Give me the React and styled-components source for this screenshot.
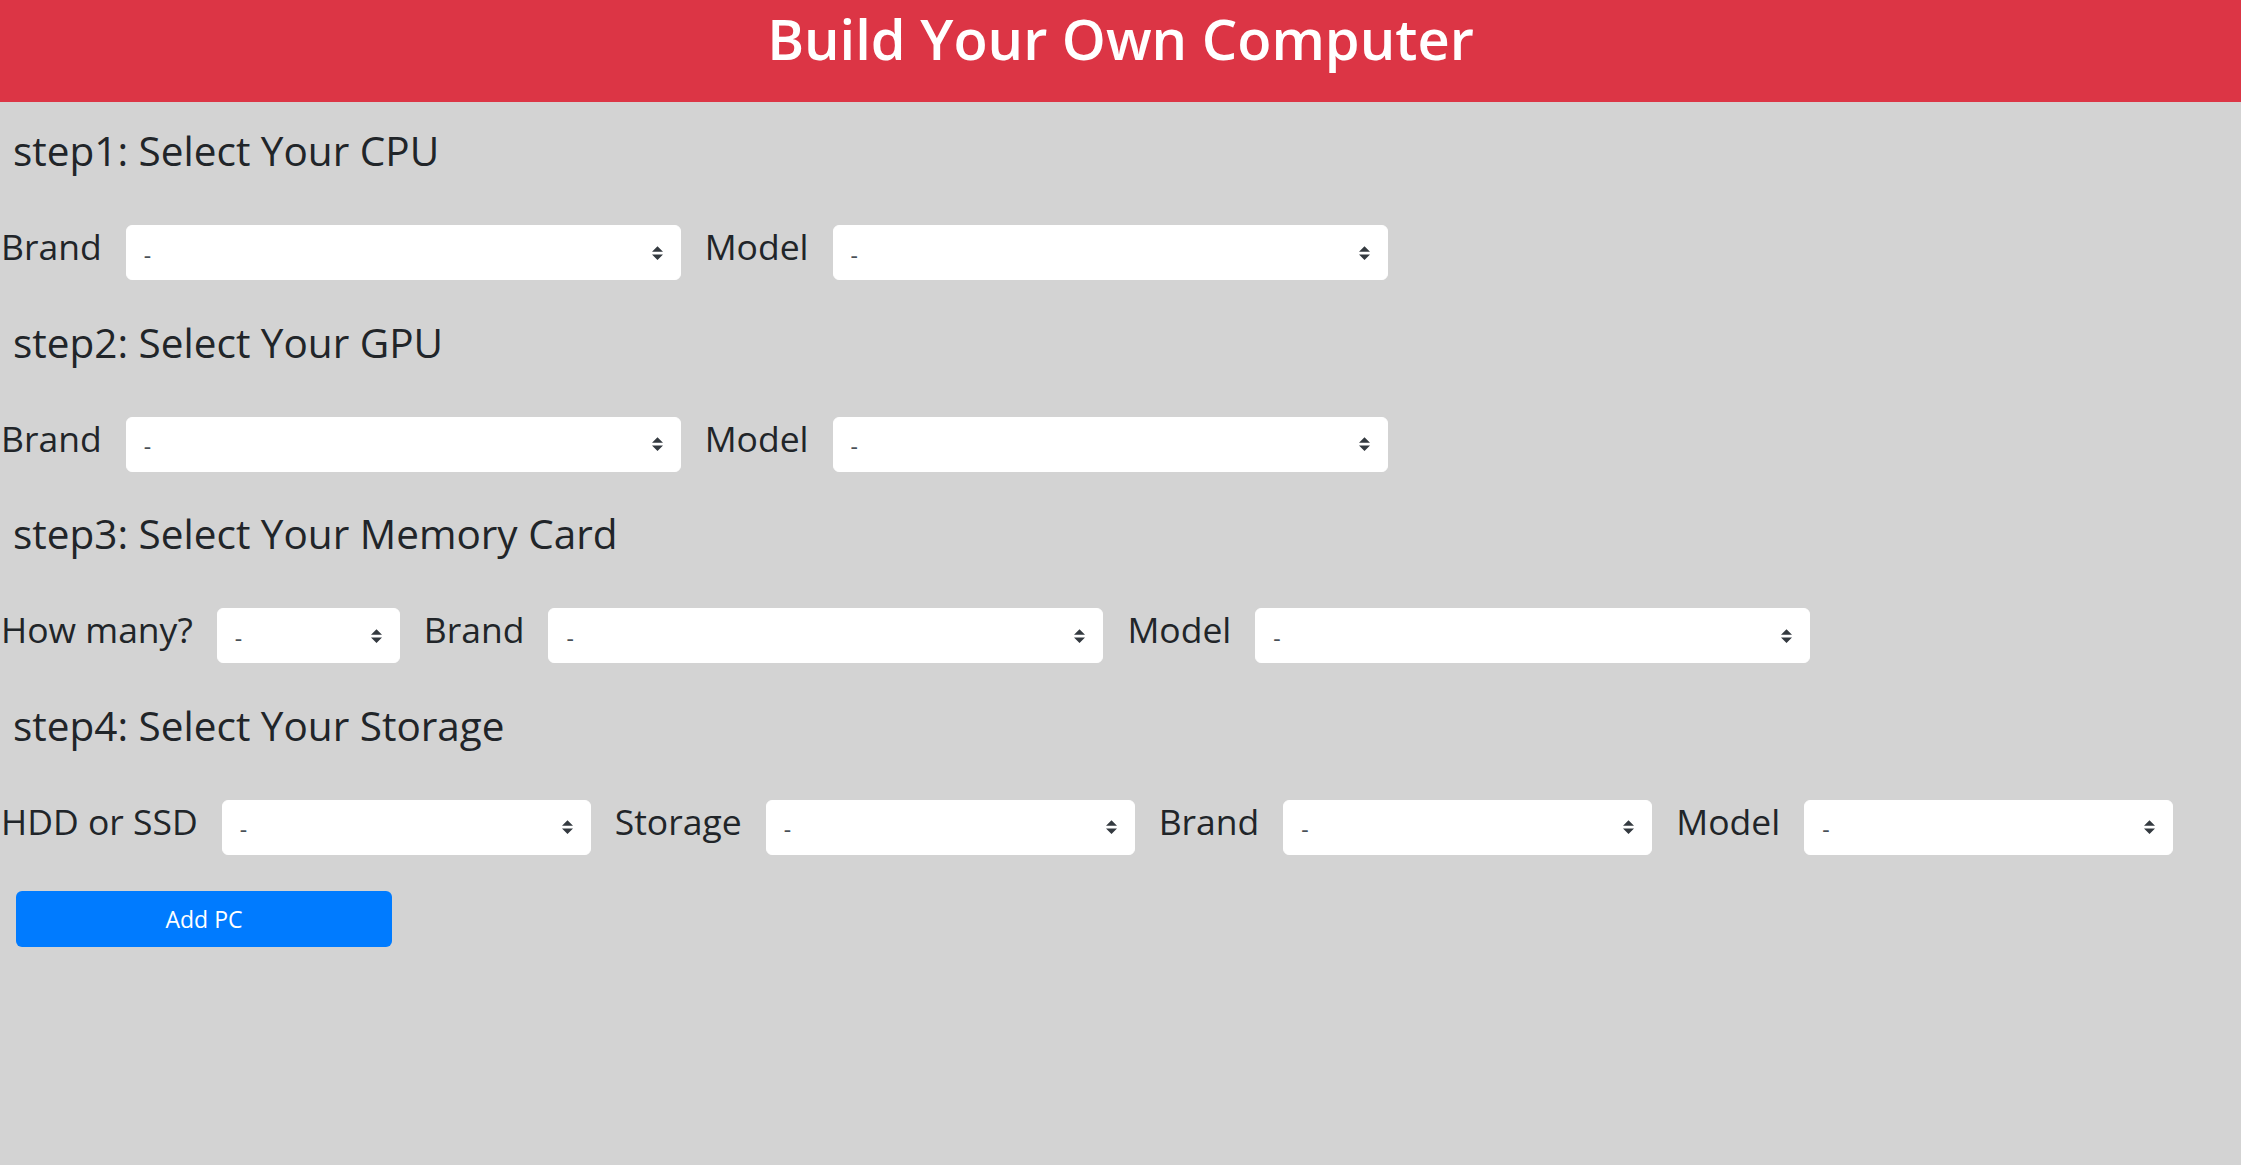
import React from "react";
import styled, { createGlobalStyle } from "styled-components";

const GlobalStyle = createGlobalStyle`
  html, body {
    margin: 0;
    padding: 0;
    background: #d3d3d3;
    font-family: "Open Sans", "Noto Sans", sans-serif;
    color: #212529;
  }
  * { box-sizing: border-box; }
`;

const Header = styled.header`
  height: 102px;
  background: #dc3545;
  display: flex;
  justify-content: center;
  align-items: flex-start;
  padding-top: 5px;
`;

const Title = styled.h1`
  margin: 0;
  color: #fff;
  font-size: 56px;
  font-weight: 600;
  line-height: 1.2;
`;

const Main = styled.main`
  display: flex;
  flex-direction: column;
  padding-left: 1px;
`;

const StepHeading = styled.h3`
  margin: 38.5px 0 49.5px 12px;
  font-size: 40.5px;
  font-weight: 500;
  line-height: 1.2;
  color: #212529;
  &:first-child {
    margin-top: 25px;
  }
`;

const Row = styled.div`
  display: flex;
  align-items: flex-start;
  gap: 24px;
`;

const Label = styled.label`
  font-size: 35.5px;
  font-weight: 500;
  line-height: 1.2;
  color: #212529;
  white-space: nowrap;
`;

const SelectWrap = styled.div`
  position: relative;
  width: ${(p) => p.$w}px;
  flex: none;
`;

const Select = styled.select`
  appearance: none;
  -webkit-appearance: none;
  width: 100%;
  height: 55px;
  border: 1px solid #fff;
  border-radius: 6px;
  background: #fff;
  color: #495057;
  font-family: "Open Sans", "Noto Sans", sans-serif;
  font-size: 23px;
  padding: 4px 40px 0 17px;
  outline: none;
`;

const Arrow = styled.svg`
  position: absolute;
  right: 18px;
  top: 50%;
  transform: translateY(-50%);
  width: 11px;
  height: 14px;
  pointer-events: none;
`;

const AddButton = styled.button`
  margin: 36px 0 0 15px;
  width: 376px;
  height: 56px;
  border: none;
  border-radius: 6px;
  background: #007bff;
  color: #fff;
  font-family: "Open Sans", "Noto Sans", sans-serif;
  font-size: 23px;
  font-weight: 400;
  cursor: pointer;
`;

function Field({ label, width }) {
  return (
    <>
      <Label>{label}</Label>
      <SelectWrap $w={width}>
        <Select defaultValue="-">
          <option value="-">-</option>
        </Select>
        <Arrow viewBox="0 0 4 5" aria-hidden="true">
          <path fill="#343a40" d="M2 0L0 2h4zm0 5L0 3h4z" />
        </Arrow>
      </SelectWrap>
    </>
  );
}

const steps = [
  {
    title: "step1: Select Your CPU",
    fields: [
      ["Brand", 555],
      ["Model", 555],
    ],
  },
  {
    title: "step2: Select Your GPU",
    fields: [
      ["Brand", 555],
      ["Model", 555],
    ],
  },
  {
    title: "step3: Select Your Memory Card",
    fields: [
      ["How many?", 183],
      ["Brand", 555],
      ["Model", 555],
    ],
  },
  {
    title: "step4: Select Your Storage",
    fields: [
      ["HDD or SSD", 369],
      ["Storage", 369],
      ["Brand", 369],
      ["Model", 369],
    ],
  },
];

export default function App() {
  return (
    <>
      <GlobalStyle />
      <Header>
        <Title>Build Your Own Computer</Title>
      </Header>
      <Main>
        {steps.map((s) => (
          <React.Fragment key={s.title}>
            <StepHeading>{s.title}</StepHeading>
            <Row>
              {s.fields.map(([l, w]) => (
                <Field key={l} label={l} width={w} />
              ))}
            </Row>
          </React.Fragment>
        ))}
        <div>
          <AddButton>Add PC</AddButton>
        </div>
      </Main>
    </>
  );
}
